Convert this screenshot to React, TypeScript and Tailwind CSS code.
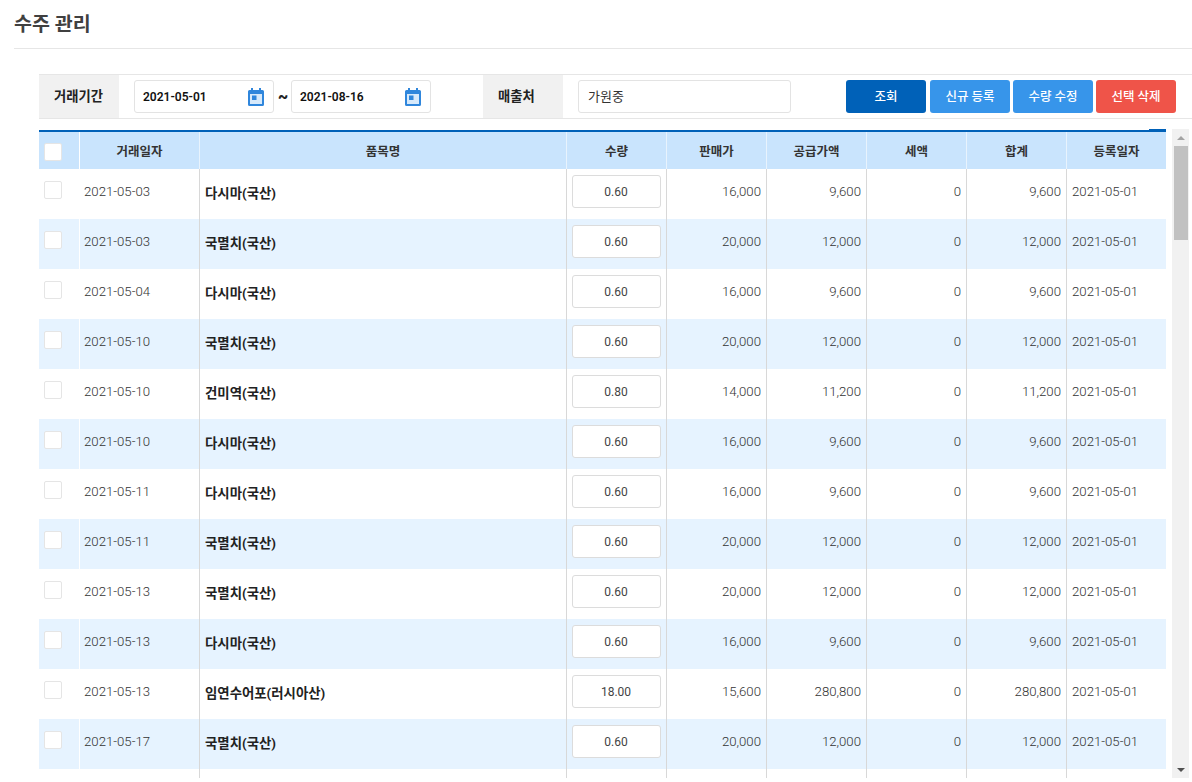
import React from "react";

const FONT = "font-['Roboto','Noto_Sans_CJK_KR',sans-serif]";

const rows: [string, string, string, string, string, string][] = [
  ["2021-05-03", "다시마(국산)", "0.60", "16,000", "9,600", "9,600"],
  ["2021-05-03", "국멸치(국산)", "0.60", "20,000", "12,000", "12,000"],
  ["2021-05-04", "다시마(국산)", "0.60", "16,000", "9,600", "9,600"],
  ["2021-05-10", "국멸치(국산)", "0.60", "20,000", "12,000", "12,000"],
  ["2021-05-10", "건미역(국산)", "0.80", "14,000", "11,200", "11,200"],
  ["2021-05-10", "다시마(국산)", "0.60", "16,000", "9,600", "9,600"],
  ["2021-05-11", "다시마(국산)", "0.60", "16,000", "9,600", "9,600"],
  ["2021-05-11", "국멸치(국산)", "0.60", "20,000", "12,000", "12,000"],
  ["2021-05-13", "국멸치(국산)", "0.60", "20,000", "12,000", "12,000"],
  ["2021-05-13", "다시마(국산)", "0.60", "16,000", "9,600", "9,600"],
  ["2021-05-13", "임연수어포(러시아산)", "18.00", "15,600", "280,800", "280,800"],
  ["2021-05-17", "국멸치(국산)", "0.60", "20,000", "12,000", "12,000"],
  ["", "", "", "", "", ""],
];

function Calendar() {
  return (
    <svg width="16" height="18" viewBox="0 0 16 18" className="shrink-0">
      <path fill="#2f86dc" d="M3 0h2v2h6V0h2v2h1.500A1.500 1.500 0 0 1 16 3.500v13a1.500 1.500 0 0 1-1.500 1.500h-13A1.500 1.500 0 0 1 0 16.500v-13A1.500 1.500 0 0 1 1.500 2H3z" />
      <rect x="2" y="6" width="12" height="10" fill="#d6e9fb" />
      <rect x="4" y="7.500" width="4.500" height="4.500" fill="#2f86dc" />
    </svg>
  );
}

function DateBox({ value }: { value: string }) {
  return (
    <div className="flex h-[33px] w-[140px] items-center justify-between rounded-[3px] border border-[#e3e3e3] bg-white pl-[8px] pr-[9px]">
      <span className="text-[12px] font-semibold text-[#111]">{value}</span>
      <Calendar />
    </div>
  );
}

function Label({ children }: { children: React.ReactNode }) {
  return (
    <div className="flex h-full w-[80px] items-center bg-[#f1f1f1] pl-[15px] text-[13.3px] font-bold text-[#222]">
      {children}
    </div>
  );
}

function Btn({ children, cls }: { children: React.ReactNode; cls: string }) {
  return (
    <div className={`flex h-[33px] w-[80px] items-center justify-center rounded-[3px] pt-[1px] text-[12.5px] font-medium text-white ${cls}`}>
      {children}
    </div>
  );
}

const HEAD = ["거래일자", "품목명", "수량", "판매가", "공급가액", "세액", "합계", "등록일자"];
const WIDTHS = ["w-[120px]", "w-[367px]", "w-[100px]", "w-[100px]", "w-[100px]", "w-[100px]", "w-[100px]", "w-[99px]"];

function Row({ r, alt }: { r: (typeof rows)[number]; alt: boolean }) {
  const empty = r[0] === "";
  const num = "flex items-center justify-end border-r border-[#d8d8d8] pr-[5px] pb-[5px] text-[13.2px] font-light text-[#333]";
  return (
    <div className={`flex h-[50px] shrink-0 ${alt ? "bg-[#e6f3ff]" : "bg-white"}`}>
      <div className="w-[41px] border-r border-white pl-[5px] pt-[12px]">
        {!empty && <div className="h-[18px] w-[18px] rounded-[2px] border border-[#e5e5e5] bg-white" />}
      </div>
      <div className="flex w-[120px] items-center border-r border-[#d8d8d8] pb-[5px] pl-[4px] text-[13.2px] font-light text-[#333]">
        {r[0]}
      </div>
      <div className="flex w-[367px] items-center border-r border-[#d8d8d8] pl-[5px] text-[13.4px] font-bold text-[#222]">
        {r[1]}
      </div>
      <div className="w-[100px] border-r border-[#d8d8d8] pl-[5px] pt-[6px]">
        {!empty && (
          <div className="flex h-[33px] w-[89px] items-center justify-center rounded-[3px] border border-[#dcdcdc] bg-white pr-[1px] text-[12px] font-normal text-[#444]">
            {r[2]}
          </div>
        )}
      </div>
      <div className={`w-[100px] ${num}`}>{r[3]}</div>
      <div className={`w-[100px] ${num}`}>{r[4]}</div>
      <div className={`w-[100px] ${num}`}>{empty ? "" : "0"}</div>
      <div className={`w-[100px] ${num}`}>{r[5]}</div>
      <div className="flex w-[99px] items-center pb-[5px] pl-[5px] text-[13.2px] font-light text-[#333]">
        {empty ? "" : "2021-05-01"}
      </div>
    </div>
  );
}

export default function App() {
  return (
    <div className={`h-[778px] w-[1192px] overflow-hidden bg-white ${FONT}`}>
      <div className="ml-[14px] flex h-[49px] items-center border-b border-[#e6e6e6] pt-[2px]">
        <h1 className="text-[19.5px] font-bold leading-none text-[#404040]">수주 관리</h1>
      </div>

      <div className="ml-[39px] mt-[25px] flex h-[45px] items-center border-y border-[#e6e6e6]">
        <Label>거래기간</Label>
        <div className="ml-[15px]"><DateBox value="2021-05-01" /></div>
        <span className="mx-[4px] w-[9px] text-[16px] font-black leading-none text-[#222]">~</span>
        <DateBox value="2021-08-16" />
        <div className="ml-[52px] h-full"><Label>매출처</Label></div>
        <div className="ml-[15px] flex h-[33px] w-[213px] items-center rounded-[3px] border border-[#e3e3e3] bg-white pl-[9px] text-[13px] text-[#333]">
          가원중
        </div>
        <div className="ml-[55px] flex gap-[3px]">
          <Btn cls="bg-[#0061b8] mr-[1px]">조회</Btn>
          <Btn cls="bg-[#3795ea]">신규 등록</Btn>
          <Btn cls="bg-[#3795ea]">수량 수정</Btn>
          <Btn cls="bg-[#ef5449]">선택 삭제</Btn>
        </div>
      </div>

      <div className="ml-[39px] mt-[10px] flex h-[649px]">
        <div className="relative flex w-[1127px] flex-col">
          <div className="absolute right-0 top-0 h-[1px] w-[17px] bg-[#0061b8]" />
          <div className="mt-[1px] flex h-[39px] shrink-0 border-t-[2px] border-[#0061b8] bg-[#c9e4fd]">
            <div className="w-[41px] border-r border-white pl-[5px] pt-[11px]">
              <div className="h-[18px] w-[18px] rounded-[2px] border border-[#e5e5e5] bg-white" />
            </div>
            {HEAD.map((h, i) => (
              <div
                key={h}
                className={`flex items-center justify-center pt-[3px] text-[12.5px] font-bold text-[#333] ${WIDTHS[i]} ${i < 7 ? "border-r border-[#e8f3fd]" : ""}`}
              >
                {h}
              </div>
            ))}
          </div>
          {rows.map((r, i) => (
            <Row key={i} r={r} alt={i % 2 === 1} />
          ))}
        </div>
        <div className="ml-[6px] flex w-[17px] flex-col items-center bg-[#f1f1f1]">
          <div className="flex h-[17px] w-full shrink-0 items-center justify-center">
            <div className="h-0 w-0 border-x-[4px] border-b-[4px] border-x-transparent border-b-[#a3a3a3]" />
          </div>
          <div className="h-[94px] w-[14px] bg-[#c1c1c1]" />
          <div className="flex-1" />
          <div className="flex h-[17px] w-full shrink-0 items-center justify-center">
            <div className="h-0 w-0 border-x-[4px] border-t-[4px] border-x-transparent border-t-[#505050]" />
          </div>
        </div>
      </div>
    </div>
  );
}
